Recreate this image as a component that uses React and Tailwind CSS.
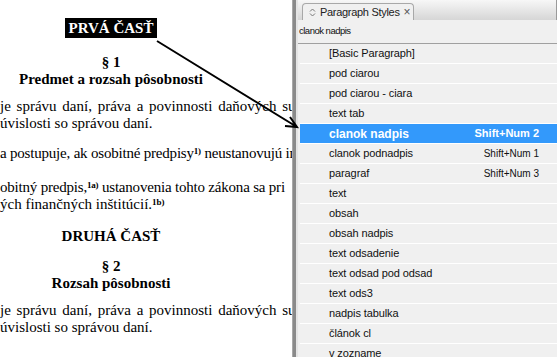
import React from 'react';

const styles = [
  { name: '[Basic Paragraph]' },
  { name: 'pod ciarou' },
  { name: 'pod ciarou - ciara' },
  { name: 'text tab' },
  { name: 'clanok nadpis', key: 'Shift+Num 2', active: true },
  { name: 'clanok podnadpis', key: 'Shift+Num 1' },
  { name: 'paragraf', key: 'Shift+Num 3' },
  { name: 'text' },
  { name: 'obsah' },
  { name: 'obsah nadpis' },
  { name: 'text odsadenie' },
  { name: 'text odsad pod odsad' },
  { name: 'text ods3' },
  { name: 'nadpis tabulka' },
  { name: 'článok cl' },
  { name: 'v zozname' },
];

function Document() {
  return (
    <div className="w-[292px] shrink-0 overflow-hidden bg-white pt-[18px] text-[15px] leading-[17px] text-black font-['Liberation_Serif',serif]">
      {/* centered headings sit on a column centred at x=111 */}
      <div className="w-[222px] flex flex-col items-center">
        <div className="h-[20px] px-[4px] bg-black text-white font-bold flex items-center">PRVÁ ČASŤ</div>
        <div className="mt-[16px] font-bold">§ 1</div>
        <div className="font-bold">Predmet a rozsah pôsobnosti</div>
      </div>
      <div className="mt-[10px] whitespace-nowrap [word-spacing:2px]">je správu daní, práva a povinnosti daňových subjektov</div>
      <div className="whitespace-nowrap">úvislosti so správou daní.</div>
      <div className="mt-[13px] whitespace-nowrap tracking-[-0.2px]">
        a postupuje, ak osobitné predpisy<sup className="text-[9px] font-bold">1)</sup> neustanovujú inak.
      </div>
      <div className="mt-[17px] whitespace-nowrap tracking-[-0.2px]">
        obitný predpis,<sup className="text-[9px] font-bold">1a)</sup> ustanovenia tohto zákona sa pri
      </div>
      <div className="whitespace-nowrap">
        ých finančných inštitúcií.<sup className="text-[9px] font-bold">1b)</sup>
      </div>
      <div className="w-[222px] flex flex-col items-center">
        <div className="mt-[15px] font-bold">DRUHÁ ČASŤ</div>
        <div className="mt-[13px] font-bold">§ 2</div>
        <div className="font-bold">Rozsah pôsobnosti</div>
      </div>
      <div className="mt-[10px] whitespace-nowrap [word-spacing:2px]">je správu daní, práva a povinnosti daňových subjektov</div>
      <div className="whitespace-nowrap">úvislosti so správou daní.</div>
    </div>
  );
}

function StylesPanel() {
  return (
    <div className="flex-1 min-w-0 flex flex-col bg-[#f0f0f0] font-['Liberation_Sans',sans-serif] text-[#111]">
      {/* tab strip */}
      <div className="h-[20px] shrink-0 flex items-end pl-[4px] bg-gradient-to-b from-[#f7f7f7] to-[#d6d6d6] border-r border-[#9a9a9a]">
        <div className="h-[17px] w-[112px] flex items-center gap-[4px] pl-[6px] bg-[#f0f0f0] border border-b-0 border-[#a8a8a8] rounded-t-[4px] text-[11px] tracking-[-0.3px] whitespace-nowrap text-[#222]">
          <svg width="7" height="9" viewBox="0 0 7 9" className="shrink-0">
            <path d="M1 3.5 L3.5 1 L6 3.5 M1 5.5 L3.5 8 L6 5.5" fill="none" stroke="#777" strokeWidth="1" />
          </svg>
          <span>Paragraph Styles</span>
          <span className="text-[12px] text-[#555]">×</span>
        </div>
      </div>
      {/* current style */}
      <div className="h-[24px] shrink-0 flex items-center pl-[1px] text-[9.5px] tracking-[-0.5px] border-b border-[#a0a0a0]">
        clanok nadpis
      </div>
      {/* style list */}
      <div className="flex-1 overflow-hidden pl-[2px]">
        {styles.map((s) => (
          <div
            key={s.name}
            className={`h-[20px] flex items-center justify-between pl-[29px] pr-[18px] border-b border-white ${
              s.active ? 'bg-[#3399fb] text-white font-bold' : 'bg-[#f0f0f0]'
            }`}
          >
            <span className={s.active ? 'text-[12px]' : 'text-[11px] tracking-[-0.1px]'}>{s.name}</span>
            {s.key && <span className={s.active ? 'text-[11px]' : 'text-[10px]'}>{s.key}</span>}
          </div>
        ))}
      </div>
    </div>
  );
}

export default function App() {
  return (
    <div className="relative w-[557px] h-[357px] flex overflow-hidden bg-white">
      <Document />
      {/* window divider */}
      <div className="w-[4px] shrink-0 bg-[#8a8a8a] border-l border-[#a8a8a8]" />
      <div className="w-[2px] shrink-0 bg-[#e4e4e4]" />
      <StylesPanel />
      {/* annotation arrow */}
      <svg className="absolute inset-0 pointer-events-none" width="557" height="357">
        <path d="M157 41 L297 127 M290 117 L297 127 L285 126" fill="none" stroke="#000" strokeWidth="2" />
      </svg>
    </div>
  );
}
